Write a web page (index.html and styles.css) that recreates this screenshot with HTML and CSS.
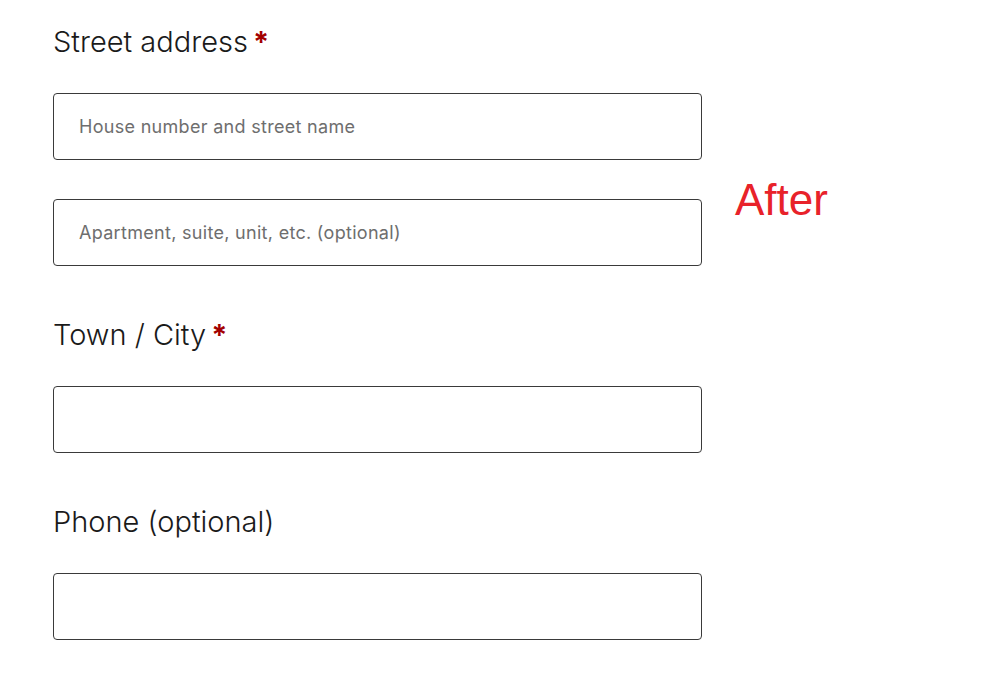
FILE: index.html
```html
<!DOCTYPE html>
<html lang="en">
<head>
  <meta charset="UTF-8" />
  <meta name="viewport" content="width=device-width, initial-scale=1.0"/>
  <title>Checkout Fields</title>
  <link rel="stylesheet" href="styles.css">
</head>
<body>

  <div class="page">
    <form class="fields">
      <div class="field">
        <label for="street">Street address<span class="required">*</span></label>
        <input type="text" id="street" placeholder="House number and street name">
        <input type="text" id="street2" placeholder="Apartment, suite, unit, etc. (optional)">
      </div>

      <div class="field">
        <label for="city">Town / City<span class="required">*</span></label>
        <input type="text" id="city">
      </div>

      <div class="field">
        <label for="phone">Phone (optional)</label>
        <input type="tel" id="phone">
      </div>
    </form>

    <div class="tag">After</div>
  </div>

</body>
</html>
```

FILE: styles.css
```css
body {
  font-family: Inter, "Open Sans", sans-serif;
  background-color: white;
  color: #1a1a1a;
  margin: 0;
  padding: 0;
}

.page {
  display: flex;
  align-items: flex-start;
  padding: 21px 0 0 53px;
}

.fields {
  width: 649px;
  display: flex;
  flex-direction: column;
  gap: 48px;
}

.field {
  display: flex;
  flex-direction: column;
  gap: 39px;
}

.field label {
  font-size: 29px;
  font-weight: 300;
  line-height: 42px;
  margin-bottom: -9px;
}

.required {
  color: #a30000;
  font-weight: 700;
  margin-left: 5px;
}

input {
  box-sizing: border-box;
  width: 100%;
  height: 67px;
  border: 1px solid #3a3a3a;
  border-radius: 4px;
  padding: 0 25px;
  font-family: Inter, "Open Sans", sans-serif;
  font-size: 18px;
  letter-spacing: 0.3px;
  color: #1a1a1a;
  background: white;
}

input::placeholder {
  color: #6e6e6e;
  font-weight: 400;
}

.tag {
  margin: 154px 0 0 33px;
  font-family: "Liberation Sans", Arial, sans-serif;
  font-size: 44px;
  color: #e8222a;
}
```
